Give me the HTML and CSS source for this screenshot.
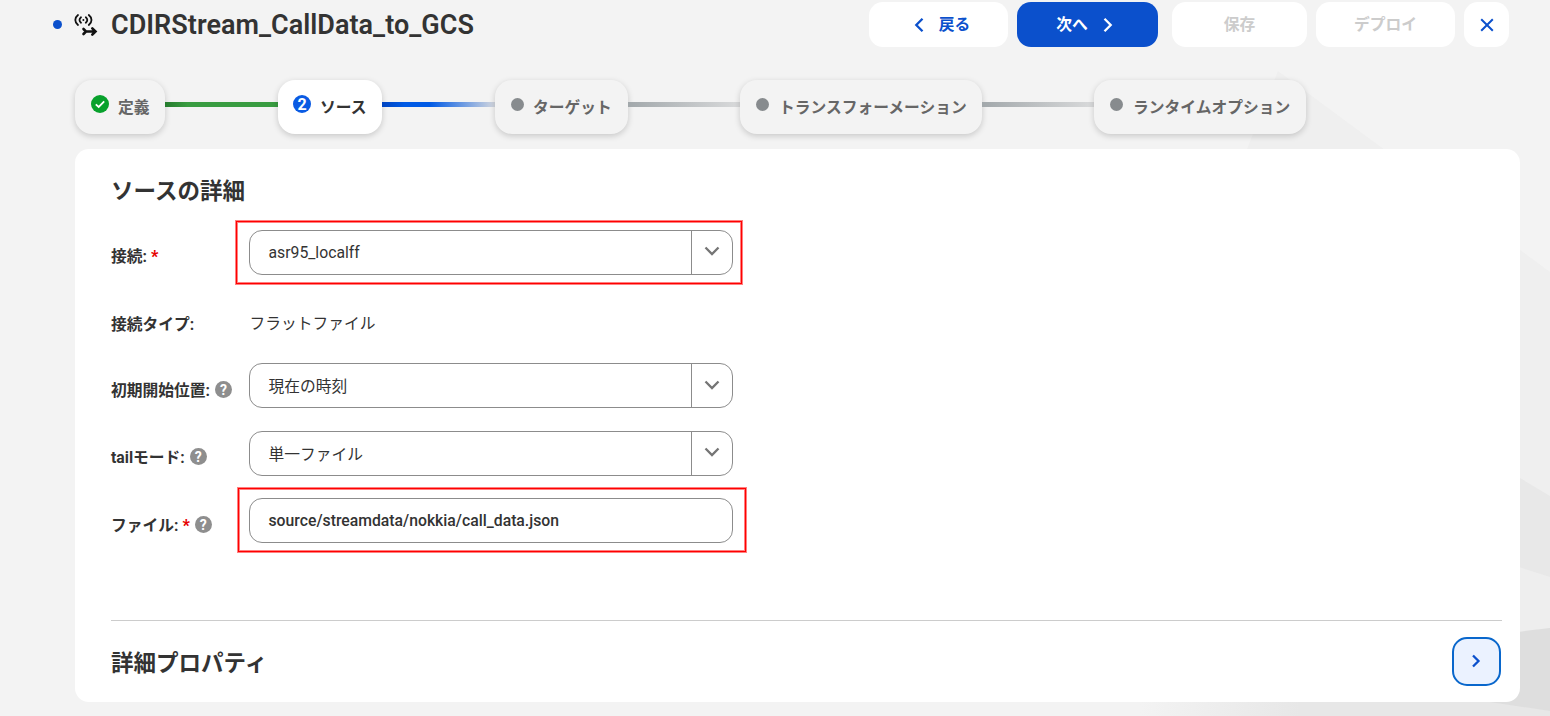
FILE: index.html
```html
<!DOCTYPE html>
<html lang="ja">
<head>
<meta charset="utf-8">
<title>CDIRStream_CallData_to_GCS</title>
<link rel="stylesheet" href="styles.css">
</head>
<body>
<svg class="backdrop" width="1550" height="716" viewBox="0 0 1550 716" aria-hidden="true">
  <defs>
    <linearGradient id="shade" x1="1140" x2="1300" y1="0" y2="0" gradientUnits="userSpaceOnUse"><stop offset="0" stop-color="#f3f3f3"/><stop offset="1" stop-color="#e7e7e7"/></linearGradient>
  </defs>
  <path d="M1278 71L1550 272V716H1140L1247 149Z" fill="#efefef"/>
  <path d="M1140 690H1550V716H1140Z" fill="url(#shade)"/>
  <path d="M1450 436L1550 496V580L1450 545Z" fill="#e8e8e8"/>
  <path d="M1450 545L1550 577V630L1450 640Z" fill="#eee"/>
  <path d="M1450 640L1550 628V711L1450 696Z" fill="#dedede"/>
</svg>
<div class="page">
  <header class="header">
    <span class="status-dot"></span>
    <svg class="stream-icon" width="24" height="24" viewBox="0 0 24 24" fill="none" stroke="#111" stroke-width="1.8" stroke-linecap="round">
      <path d="M4 2C.400 4.800.400 9.200 4 12M7 4.300C5 6 5 8.200 7 9.800M14.800 2C18.400 4.800 18.400 9.200 14.800 12M11.800 4.300C13.800 6 13.800 8.200 11.800 9.800"/>
      <circle cx="9.400" cy="7" r="1" fill="#111" stroke="none"/>
      <path d="M9.500 16L12 18.500L9.500 21M12 18.500H21.500M18.300 15.300L21.500 18.500L18.300 21.700" stroke-width="2.600"/>
    </svg>
    <h1 class="title">CDIRStream_CallData_to_GCS</h1>
    <div class="actions">
      <button class="btn back"><svg width="10" height="16" viewBox="0 0 10 16"><path d="M8.500 1.800L2.300 8L8.500 14.200"/></svg><span>戻る</span></button>
      <button class="btn next"><span>次へ</span><svg width="10" height="16" viewBox="0 0 10 16"><path d="M1.500 1.800L7.700 8L1.500 14.200"/></svg></button>
      <button class="btn save" disabled>保存</button>
      <button class="btn deploy" disabled>デプロイ</button>
      <button class="btn close" aria-label="閉じる"><svg width="14" height="14" viewBox="0 0 14 14"><path d="M1.200 1.200L12.800 12.800M12.800 1.200L1.200 12.800"/></svg></button>
    </div>
  </header>
  <nav class="steps">
    <div class="step define"><svg width="18" height="18" viewBox="0 0 18 18"><circle cx="9" cy="9" r="9" fill="#08a12c"/><path d="M4.800 9.300L7.700 12L13.200 6.400" fill="none" stroke="#fff" stroke-width="1.800"/></svg><span class="step-name">定義</span></div>
    <div class="line green"></div>
    <div class="step source active"><span class="num">2</span><span class="step-name">ソース</span></div>
    <div class="line blue"></div>
    <div class="step target"><span class="dot"></span><span class="step-name">ターゲット</span></div>
    <div class="line gray"></div>
    <div class="step transform"><span class="dot"></span><span class="step-name">トランスフォーメーション</span></div>
    <div class="line gray"></div>
    <div class="step runtime"><span class="dot"></span><span class="step-name">ランタイムオプション</span></div>
  </nav>
  <main class="card">
    <h2 class="heading">ソースの詳細</h2>
    <div class="row connection">
      <label class="label">接続:<b class="req">*</b></label>
      <div class="control"><span class="value">asr95_localff</span><span class="drop"><svg width="16" height="10" viewBox="0 0 16 10"><path d="M1.500 1.500L8 8L14.500 1.500"/></svg></span></div>
      <div class="mark mark-connection"></div>
    </div>
    <div class="row type">
      <label class="label">接続タイプ:</label>
      <span class="plain">フラットファイル</span>
    </div>
    <div class="row position">
      <label class="label">初期開始位置:<span class="help">?</span></label>
      <div class="control"><span class="value">現在の時刻</span><span class="drop"><svg width="16" height="10" viewBox="0 0 16 10"><path d="M1.500 1.500L8 8L14.500 1.500"/></svg></span></div>
    </div>
    <div class="row tail">
      <label class="label">tailモード:<span class="help">?</span></label>
      <div class="control"><span class="value">単一ファイル</span><span class="drop"><svg width="16" height="10" viewBox="0 0 16 10"><path d="M1.500 1.500L8 8L14.500 1.500"/></svg></span></div>
    </div>
    <div class="row file">
      <label class="label">ファイル:<b class="req">*</b><span class="help">?</span></label>
      <div class="control"><span class="value strong">source/streamdata/nokkia/call_data.json</span></div>
      <div class="mark mark-file"></div>
    </div>
    <section class="advanced">
      <h2 class="heading">詳細プロパティ</h2>
      <button class="expand" aria-label="展開"><svg width="10" height="14" viewBox="0 0 10 14"><path d="M2 1.500L7.500 7L2 12.500"/></svg></button>
    </section>
  </main>
</div>
</body>
</html>
```
FILE: styles.css
```css
* { box-sizing: border-box; }
body { margin: 0; height: 716px; overflow: hidden; background: #f3f3f3; color: #333; font: 15.75px/24px Roboto, "Noto Sans CJK JP", sans-serif; }
h1, h2 { margin: 0; }
svg { flex: none; display: block; }
.backdrop { position: absolute; top: 0; left: 0; z-index: -1; }
.page { padding: 2px 30px 0 52px; }
.header { display: flex; align-items: center; height: 45px; padding-right: 11px; }
.status-dot { width: 9px; height: 9px; margin-left: 1px; border-radius: 50%; background: #0b50cc; }
.stream-icon { margin-left: 12px; }
.title { margin-left: 13px; font-size: 27px; line-height: 34px; font-weight: 600; letter-spacing: .03px; }
.actions { display: flex; margin-left: auto; }
.btn { display: flex; align-items: center; justify-content: center; height: 45px; padding: 0; border: 0; border-radius: 14px; background: #fff; color: #0b50cc; font: 700 15.75px/24px Roboto, "Noto Sans CJK JP", sans-serif; }
.btn svg, .expand svg { fill: none; stroke: currentColor; stroke-width: 2.3; }
.back { width: 139px; gap: 15px; padding-left: 7px; }
.next { width: 141px; margin-left: 9px; gap: 15px; padding-right: 6px; background: #0b50cc; color: #fff; }
.save { width: 135px; margin-left: 14px; color: #ccc; }
.deploy { width: 139px; margin-left: 9px; color: #ccc; }
.close { width: 45px; margin-left: 9px; }
.close svg { stroke-width: 2; }
.steps { display: flex; margin: 33px 0 0 23px; }
.step { display: flex; flex: none; height: 54px; padding: 0 0 0 15px; border-radius: 17px; background: #f3f3f3; box-shadow: 0 2px 6px rgba(0, 0, 0, .18); color: #666; font-weight: 700; }
.step-name { padding-top: 16px; white-space: nowrap; }
.step svg { margin: 15px 9px 0 1px; }
.define { width: 90px; }
.source { width: 104px; }
.target { width: 133px; }
.transform { width: 242px; }
.runtime { width: 212px; }
.active { background: #fff; color: #333; }
.num { width: 18px; height: 18px; margin: 15px 9px 0 0; border-radius: 50%; background: #0a5be3; color: #fff; font-size: 16px; line-height: 19px; text-align: center; }
.dot { flex: none; width: 13px; height: 13px; margin: 18px 10px 0 1px; border-radius: 50%; background: #878b8e; }
.target .dot { margin-right: 9px; }
.line { height: 5px; margin-top: 22px; }
.green { width: 113px; background: linear-gradient(90deg, #257b2d, #399c41 20%); }
.blue { width: 113px; background: linear-gradient(90deg, #0044c0, #005ae5 20%, #005ae5 42%, #d3d7df); }
.gray { width: 112px; background: linear-gradient(90deg, #a2a8ab, #d9dadb); }
.card { width: 1445px; height: 553px; margin: 15px 0 0 23px; padding: 26px 18px 0 36px; border-radius: 14px; background: #fff; }
.heading { font-size: 22.5px; line-height: 32px; font-weight: 700; }
.row { position: relative; display: flex; height: 45px; }
.label { display: flex; width: 138px; padding-top: 15px; font-weight: 700; line-height: 24px; white-space: nowrap; }
.req { margin-left: 4px; color: #e60000; }
.help { width: 17px; height: 17px; margin: 3px 0 0 5px; border-radius: 50%; background: #8e8e8e; color: #fff; font-size: 14px; line-height: 18px; text-align: center; }
.control { display: flex; width: 484px; height: 45px; border: 1px solid #8c8c8c; border-radius: 13px; background: #fff; }
.value { flex: 1; padding: 10px 0 0 18.5px; }
.position .value, .tail .value { padding-top: 11px; }
.strong { font-weight: 500; }
.drop { width: 41px; padding: 16px 0 0 12px; border-left: 1px solid #8c8c8c; }
.connection .drop, .tail .drop { padding-top: 15px; }
.drop svg { fill: none; stroke: #757575; stroke-width: 2.3; }
.plain { padding: 11px 0 0 .5px; }
.connection { margin-top: 23px; }
.type { margin-top: 26px; }
.type .label { padding-top: 12px; }
.position { margin-top: 17px; }
.position .label { padding-top: 16px; }
.position .help { margin-top: 2px; }
.tail { margin-top: 23px; }
.tail .help { margin-top: 2px; }
.file { margin-top: 22px; }
.file .label { padding-top: 16px; }
.file .help { margin-top: 2px; }
.mark { position: absolute; border: 1px solid #f00; box-shadow: 0 0 0 1px rgba(255, 0, 0, .5), inset 0 0 0 1px rgba(255, 0, 0, .5); }
.mark-connection { left: 125px; top: -9px; width: 506px; height: 63px; }
.mark-file { left: 127px; top: -10px; width: 508px; height: 64px; }
.advanced { display: flex; justify-content: space-between; margin-top: 77px; padding: 16px 1px 0 0; border-top: 1px solid #ccc; }
.advanced .heading { padding-top: 10px; }
.expand { display: flex; align-items: center; justify-content: center; width: 49px; height: 49px; padding: 0 2px 1px 0; border: 2px solid #0967cc; border-radius: 15px; background: #ebf2ff; color: #0b50cc; }
```
